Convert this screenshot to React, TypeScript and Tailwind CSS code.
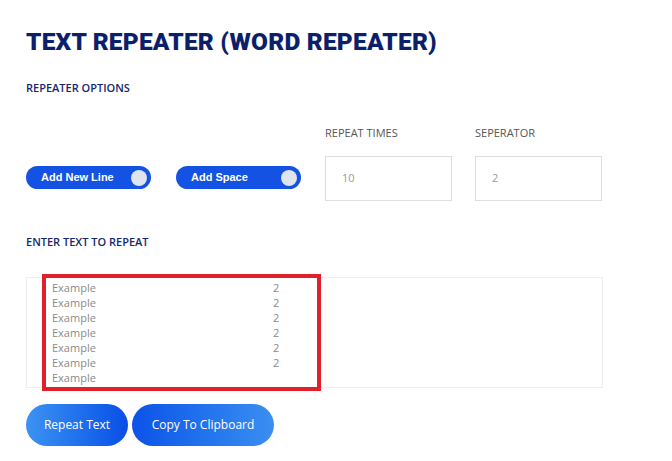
import React from "react";

const rows = ["2", "2", "2", "2", "2", "2", ""];

function Toggle({ label }: { label: string }) {
  return (
    <div className="flex h-[23px] w-[125px] items-center justify-between rounded-full bg-[#1452e3] pl-[15px] pr-[4px]">
      <span className="font-['Liberation_Sans',Arial,sans-serif] text-[11px] font-bold text-white">{label}</span>
      <span className="h-[16px] w-[16px] rounded-full bg-[#dfe4ee]" />
    </div>
  );
}

function NumberField({ label, value }: { label: string; value: string }) {
  return (
    <div className="flex w-[127px] flex-col">
      <span className="text-[11px] leading-[14px] text-[#555]">{label}</span>
      <div className="mt-[16px] flex h-[45px] items-center border border-[#dedede] pl-[16px] text-[11px] text-[#999]">
        {value}
      </div>
    </div>
  );
}

export default function App() {
  return (
    <div className="min-h-[461px] bg-white pl-[26px] pt-[27px] font-['Open_Sans',sans-serif]">
      <h1 className="font-['Roboto',sans-serif] text-[24.5px] font-black leading-[30px] tracking-[0.2px] text-[#0b1f6b]">
        TEXT REPEATER (WORD REPEATER)
      </h1>
      <h2 className="mt-[24px] text-[11px] font-semibold leading-[14px] text-[#13286e]">REPEATER OPTIONS</h2>

      <div className="mt-[31px] flex items-end">
        <div className="mb-[12px] flex gap-[25px]">
          <Toggle label="Add New Line" />
          <Toggle label="Add Space" />
        </div>
        <div className="ml-[24px] flex gap-[23px]">
          <NumberField label="REPEAT TIMES" value="10" />
          <NumberField label="SEPERATOR" value="2" />
        </div>
      </div>

      <h2 className="mt-[34px] text-[11px] font-semibold leading-[14px] text-[#13286e]">ENTER TEXT TO REPEAT</h2>

      <div className="relative mt-[28px] w-[577px]">
        <div className="h-[111px] overflow-hidden border border-[#eeeeee] pl-[25px] pt-[2px] text-[11px] leading-[15px] text-[#8a8a8a]">
          {rows.map((sep, i) => (
            <div key={i} className="flex">
              <span className="w-[221px]">Example</span>
              <span>{sep}</span>
            </div>
          ))}
        </div>
        <div className="absolute left-[16px] top-[-3px] h-[117px] w-[279px] border-[4px] border-[#e1202b]" />
      </div>

      <div className="mt-[16px] flex gap-[4px]">
        <button className="h-[42px] w-[102px] rounded-full bg-gradient-to-r from-[#3d92f2] to-[#0b4de6] text-[12px] text-white">
          Repeat Text
        </button>
        <button className="h-[42px] w-[142px] rounded-full bg-gradient-to-r from-[#0d52e8] to-[#3b8ef1] text-[12px] text-white">
          Copy To Clipboard
        </button>
      </div>
    </div>
  );
}
